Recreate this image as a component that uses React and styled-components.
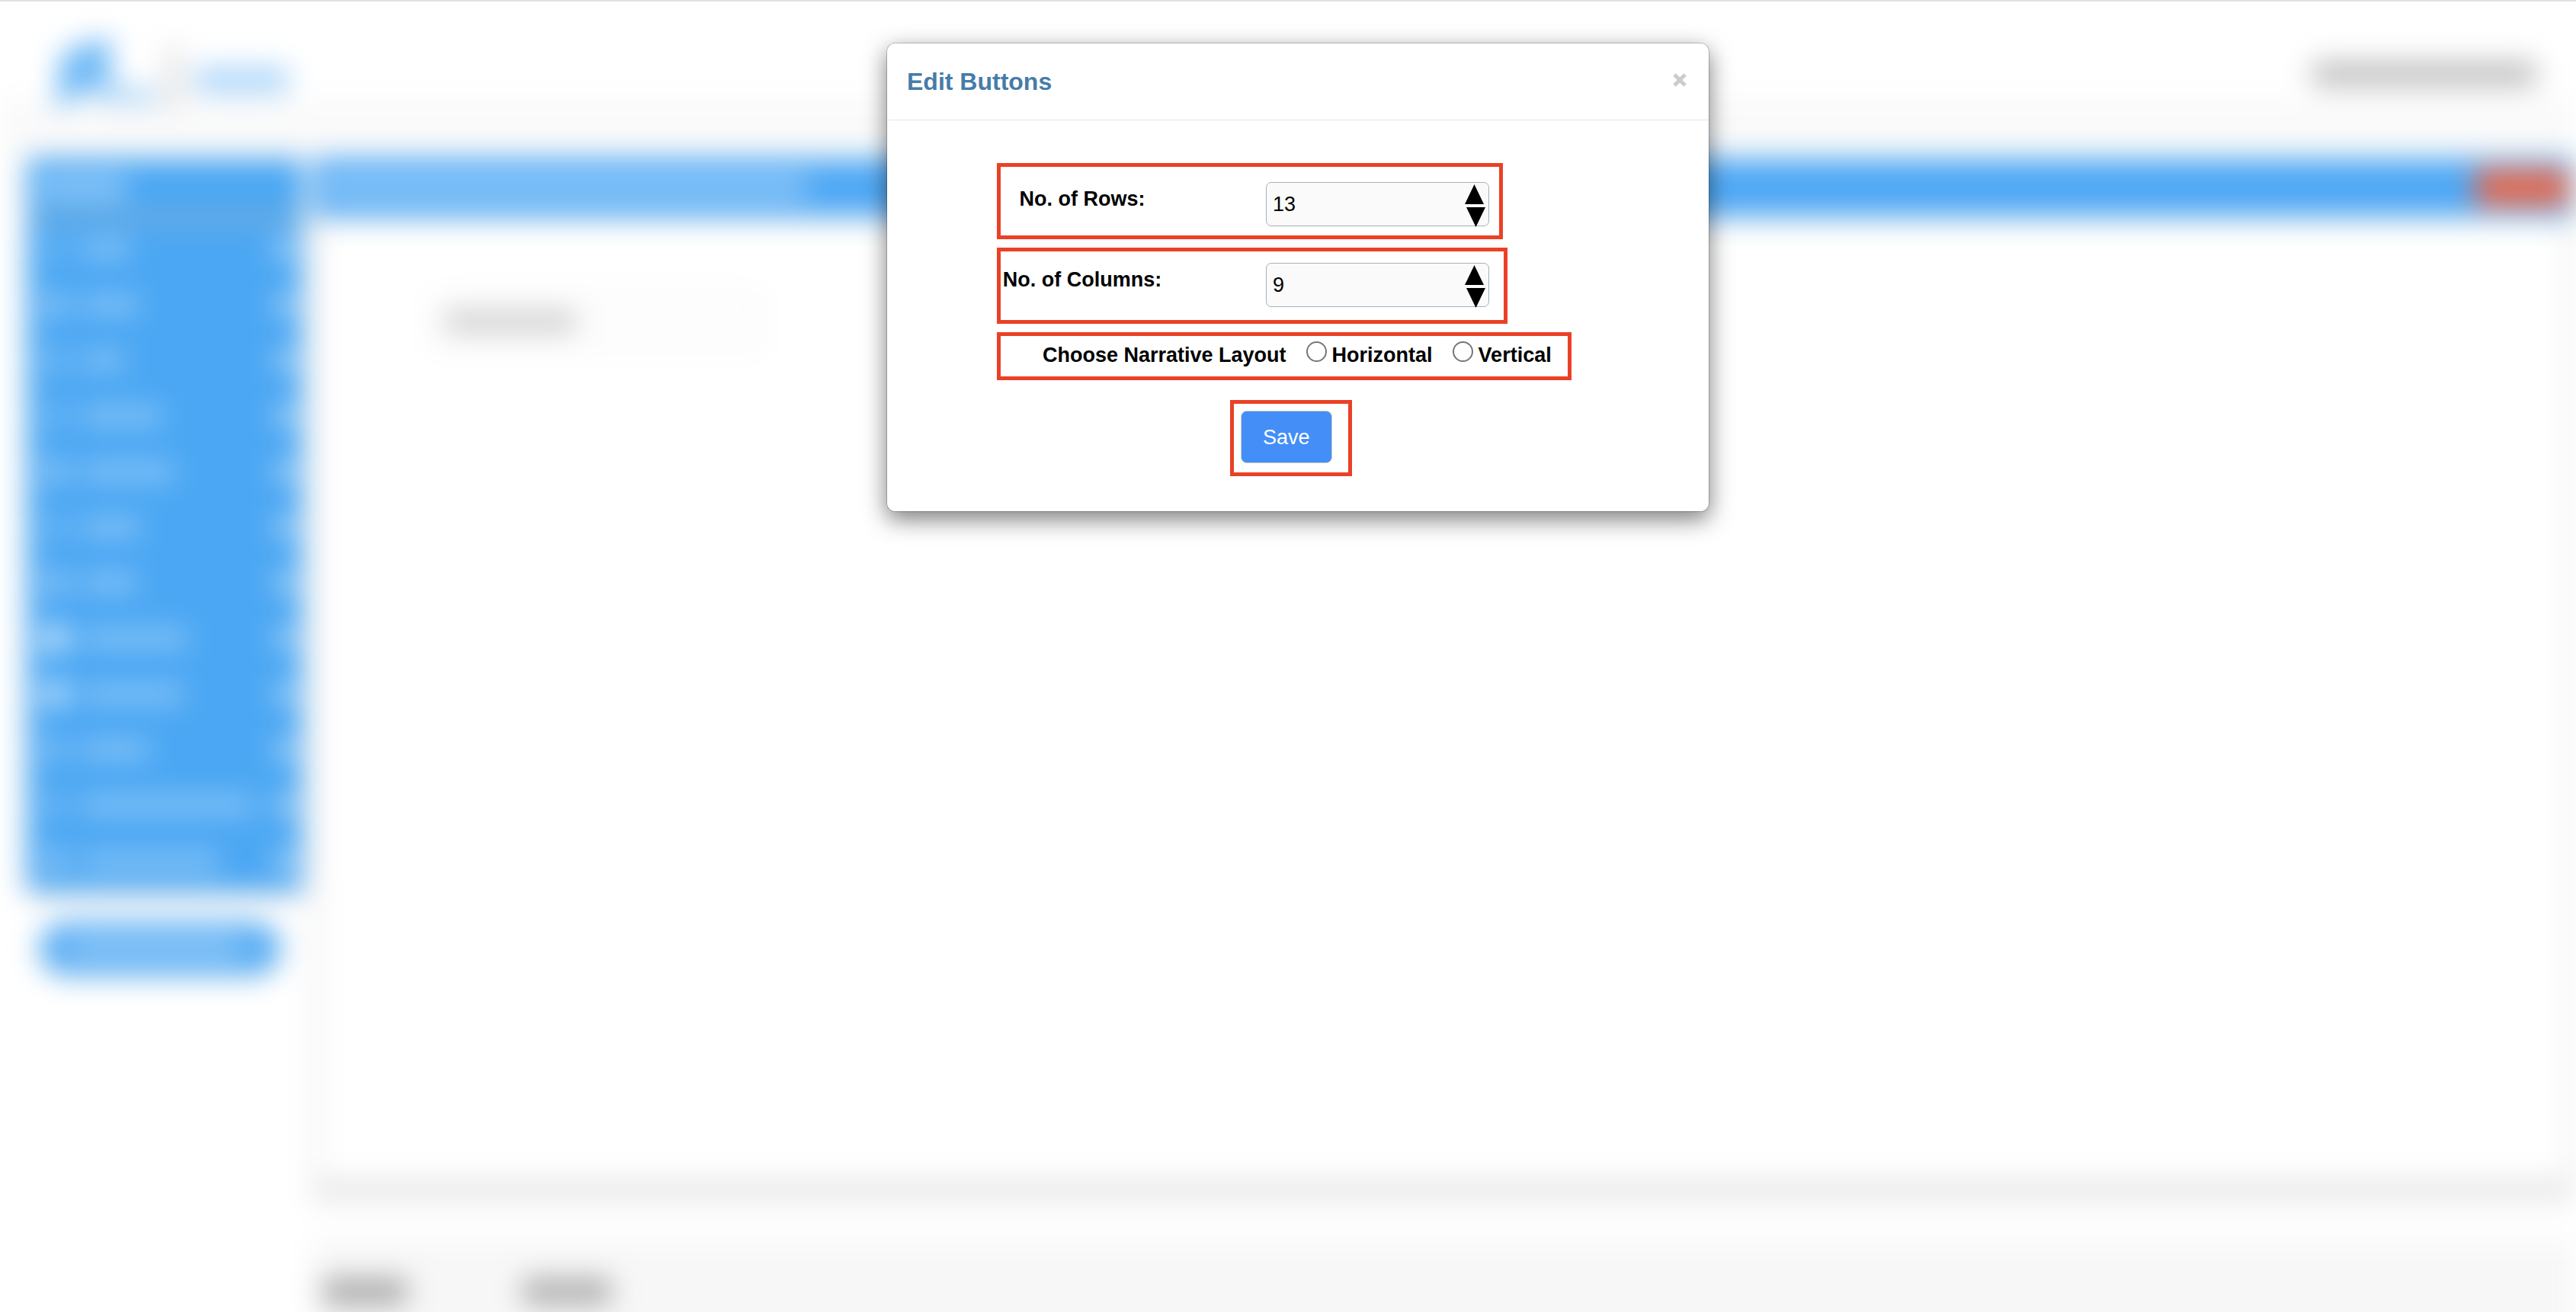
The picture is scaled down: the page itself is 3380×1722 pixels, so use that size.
import React, { useState } from "react";
import styled, { createGlobalStyle } from "styled-components";

const GlobalStyle = createGlobalStyle`
  * {
    box-sizing: border-box;
  }

  body {
    margin: 0;
    background: #fff;
    color: #000;
    font-family: "Liberation Sans", Arial, Helvetica, sans-serif;
    font-size: 27px;
    line-height: 36px;
  }
`;

const Screen = styled.div`
  position: relative;
  height: 100vh;
  overflow: hidden;
  border-top: 2px solid #e2e2e2;
`;

/* ---------- page behind the dialog ---------- */

const Backdrop = styled.div`
  height: 100%;
  display: flex;
  flex-direction: column;
  filter: blur(18px);
`;

const TopBar = styled.header`
  height: 140px;
  flex: none;
  display: flex;
  align-items: center;
  justify-content: space-between;
  padding: 50px 52px 0 72px;
  background: linear-gradient(#fff 130px, #f9f9f9 130px);
`;

const Brand = styled.div`
  display: flex;
  align-items: flex-end;
`;

const Smudge = styled.span`
  display: block;
  width: ${(p) => p.$w}px;
  height: ${(p) => p.$h || 24}px;
  background: ${(p) => p.$color || "rgba(255, 255, 255, 0.34)"};
`;

const Columns = styled.div`
  flex: 1;
  display: flex;
  gap: 14px;
  padding: 66px 4px 0 36px;
  background: linear-gradient(#fafafa 66px, #fff 66px);
`;

const Side = styled.aside`
  width: 360px;
  flex: none;
`;

const Menu = styled.nav`
  background: #4ba7f3;
  height: 962px;
  box-shadow: 0 6px 16px rgba(0, 0, 0, 0.15);
`;

const MenuTitle = styled.div`
  height: 82px;
  padding: 24px 14px 0;
  border-bottom: 8px solid #9db4c6;
`;

const MenuItem = styled.div`
  height: 73px;
  display: flex;
  align-items: center;
  gap: 20px;
  padding: 0 10px 0 20px;

  & > :last-child {
    margin-left: auto;
  }
`;

const Pill = styled.div`
  height: 70px;
  margin: 40px 28px 0 16px;
  padding: 22px 40px;
  border-radius: 35px;
  background: #5aaef4;
  box-shadow: 0 4px 10px rgba(0, 0, 0, 0.1);
`;

const Main = styled.main`
  flex: 1;
  min-width: 0;
`;

const Panel = styled.section`
  height: 1370px;
  background: #fff;
  border: 8px solid #e6e6e6;
  border-top: 0;
  border-bottom: 32px solid #e9e9e9;
`;

const PanelTitle = styled.div`
  height: 76px;
  display: flex;
  align-items: center;
  justify-content: space-between;
  margin: 0 -8px;
  padding: 0 6px 0 10px;
  background: #4fa8f5;
  box-shadow: 0 4px 8px rgba(0, 0, 0, 0.15);
`;

const NameField = styled.div`
  width: 430px;
  margin: 102px 0 0 150px;
  padding: 20px 14px;
  border: 2px solid #d6e6de;
  background: #fdfdfd;
`;

const Footer = styled.section`
  display: flex;
  gap: 152px;
  height: 140px;
  margin-top: 50px;
  padding: 50px 14px 0;
  background: #f7f7f7;
`;

const menuItems = [
  { icon: 0.16, width: 62 },
  { icon: 0.36, width: 74 },
  { icon: 0.24, width: 54 },
  { icon: 0.2, width: 104 },
  { icon: 0.36, width: 120 },
  { icon: 0.2, width: 76 },
  { icon: 0.36, width: 72 },
  { icon: 0.8, width: 138 },
  { icon: 0.7, width: 132 },
  { icon: 0.28, width: 88 },
  { icon: 0.2, width: 224 },
  { icon: 0.36, width: 180 },
];

const BlurredPage = () => (
  <Backdrop aria-hidden="true">
    <TopBar>
      <Brand>
        <svg width="150" height="94" viewBox="0 0 150 94">
          <path d="M4 70 L8 22 L40 6 L76 2 L70 44 L82 62 L48 66 L0 94 Z" fill="#6fb9f6" />
          <path d="M56 66 H134 V84 H56 Z" fill="#a3d0f7" />
        </svg>
        <Smudge $w={12} $h={84} $color="#cfcfcf" />
        <svg width="150" height="70" viewBox="0 0 150 70">
          <rect x="22" y="14" width="122" height="34" fill="#add6fa" />
        </svg>
      </Brand>
      <Smudge $w={294} $h={32} $color="#bebebe" />
    </TopBar>
    <Columns>
      <Side>
        <Menu>
          <MenuTitle>
            <Smudge $w={116} $h={28} $color="rgba(255, 255, 255, 0.4)" />
          </MenuTitle>
          {menuItems.map((item, index) => (
            <MenuItem key={index}>
              <Smudge $w={32} $h={32} $color={`rgba(255, 255, 255, ${item.icon})`} />
              <Smudge $w={item.width} />
              <Smudge $w={26} $color="rgba(255, 255, 255, 0.55)" />
            </MenuItem>
          ))}
        </Menu>
        <Pill>
          <Smudge $w={220} />
        </Pill>
      </Side>
      <Main>
        <Panel>
          <PanelTitle>
            <Smudge $w={638} $h={30} $color="rgba(255, 255, 255, 0.36)" />
            <Smudge $w={122} $h={48} $color="#ea6a4c" />
          </PanelTitle>
          <NameField>
            <Smudge $w={172} $h={28} $color="#cfcfcf" />
          </NameField>
        </Panel>
        <Footer>
          <Smudge $w={110} $h={34} $color="#a8a8a8" />
          <Smudge $w={116} $h={34} $color="#adadad" />
        </Footer>
      </Main>
    </Columns>
  </Backdrop>
);

/* ---------- dialog ---------- */

const Overlay = styled.div`
  position: absolute;
  inset: 0;
  display: flex;
  justify-content: center;
  align-items: flex-start;
  padding: 54px 0 0 26px;
`;

const Dialog = styled.div`
  width: 1080px;
  max-width: 100%;
  background: #fff;
  background-clip: padding-box;
  border: 1px solid rgba(0, 0, 0, 0.2);
  border-radius: 12px;
  box-shadow: 0 10px 30px rgba(0, 0, 0, 0.5);
`;

const DialogHeader = styled.div`
  display: flex;
  justify-content: space-between;
  align-items: flex-start;
  height: 101px;
  padding: 30px 28px 0 26px;
  border-bottom: 1px solid #e5e5e5;
`;

const Title = styled.h1`
  margin: 2px 0 0;
  color: #467ca8;
  font-size: 32px;
  line-height: 36px;
`;

const CloseButton = styled.button`
  margin-top: 8px;
  padding: 0;
  border: 0;
  background: none;
  color: #ccc;
  cursor: pointer;

  svg {
    display: block;
  }
`;

const DialogBody = styled.form`
  display: flex;
  flex-direction: column;
  align-items: flex-start;
  gap: 11px;
  padding: 56px 20px 46px 144px;
`;

const Outlined = styled.div`
  border: 5px solid #ea4126;
`;

const FieldRow = styled(Outlined)`
  display: grid;
  grid-template-columns: 214px 293px;
  column-gap: 134px;
  align-items: start;
  height: 100px;
  padding: ${(p) => (p.$wide ? "15px 19px 0 0" : "20px 13px 0 0")};
`;

const FieldLabel = styled.label`
  margin-top: 4px;
  text-align: center;
  font-weight: bold;
  white-space: nowrap;
`;

const NumberBox = styled.div`
  position: relative;
`;

const NumberInput = styled.input`
  display: block;
  width: 100%;
  height: 58px;
  padding: 0 40px 0 8px;
  border: 1px solid #a5b0bd;
  border-radius: 7px;
  background: #fafafa;
  color: #000;
  font: inherit;
  appearance: textfield;

  &::-webkit-inner-spin-button,
  &::-webkit-outer-spin-button {
    appearance: none;
    margin: 0;
  }
`;

const Stepper = styled.div`
  position: absolute;
  top: 3px;
  right: 5px;
  display: flex;
  flex-direction: column;
  gap: 4px;
`;

const StepButton = styled.button`
  display: block;
  padding: 0;
  border: 0;
  background: none;
  cursor: pointer;

  svg {
    display: block;
  }
`;

const RadioRow = styled(Outlined)`
  display: flex;
  align-items: flex-start;
  gap: 26px;
  padding: 7px 21px 10px 55px;
  font-weight: bold;
`;

const RadioLabel = styled.label`
  display: flex;
  align-items: flex-start;
  gap: 7px;
`;

const Radio = styled.input`
  appearance: none;
  width: 27px;
  height: 27px;
  margin: 0;
  border: 2px solid #767676;
  border-radius: 50%;
  background: #fff;

  &:checked {
    background: radial-gradient(#448ef7 45%, #fff 50%);
  }
`;

const SaveBox = styled(Outlined)`
  margin: 15px 0 0 306px;
  padding: 9px 21px 12px 9px;
`;

const SaveButton = styled.button`
  display: block;
  height: 69px;
  padding: 0 28px;
  border: 1px solid #ccc;
  border-radius: 8px;
  background: #448ef7;
  color: #fff;
  font: inherit;
  cursor: pointer;
`;

const NumberField = ({ id, label, value, onChange, wide }) => (
  <FieldRow $wide={wide}>
    <FieldLabel htmlFor={id}>{label}</FieldLabel>
    <NumberBox>
      <NumberInput
        id={id}
        type="number"
        value={value}
        onChange={(e) => onChange(Number(e.target.value))}
      />
      <Stepper>
        <StepButton type="button" aria-label="Increase" onClick={() => onChange(value + 1)}>
          <svg width="27" height="26" viewBox="0 0 27 26">
            <path d="M12.5 0 L25 26 H0 Z" />
          </svg>
        </StepButton>
        <StepButton type="button" aria-label="Decrease" onClick={() => onChange(value - 1)}>
          <svg width="27" height="26" viewBox="0 0 27 26">
            <path d="M2 0 H27 L14.5 26 Z" />
          </svg>
        </StepButton>
      </Stepper>
    </NumberBox>
  </FieldRow>
);

const App = () => {
  const [rows, setRows] = useState(13);
  const [columns, setColumns] = useState(9);
  const [layout, setLayout] = useState("");

  return (
    <Screen>
      <GlobalStyle />
      <BlurredPage />
      <Overlay>
        <Dialog role="dialog" aria-labelledby="dialog-title">
          <DialogHeader>
            <Title id="dialog-title">Edit Buttons</Title>
            <CloseButton type="button" aria-label="Close">
              <svg width="20" height="20" viewBox="0 0 20 20">
                <path d="M3 3 L17 17 M17 3 L3 17" stroke="currentColor" strokeWidth="5" />
              </svg>
            </CloseButton>
          </DialogHeader>
          <DialogBody onSubmit={(e) => e.preventDefault()}>
            <NumberField id="rows" label="No. of Rows:" value={rows} onChange={setRows} />
            <NumberField id="columns" label="No. of Columns:" value={columns} onChange={setColumns} wide />
            <RadioRow role="radiogroup" aria-labelledby="layout-label">
              <span id="layout-label">Choose Narrative Layout</span>
              {["Horizontal", "Vertical"].map((name) => (
                <RadioLabel key={name}>
                  <Radio
                    type="radio"
                    name="layout"
                    checked={layout === name}
                    onChange={() => setLayout(name)}
                  />
                  {name}
                </RadioLabel>
              ))}
            </RadioRow>
            <SaveBox>
              <SaveButton type="submit">Save</SaveButton>
            </SaveBox>
          </DialogBody>
        </Dialog>
      </Overlay>
    </Screen>
  );
};

export default App;
